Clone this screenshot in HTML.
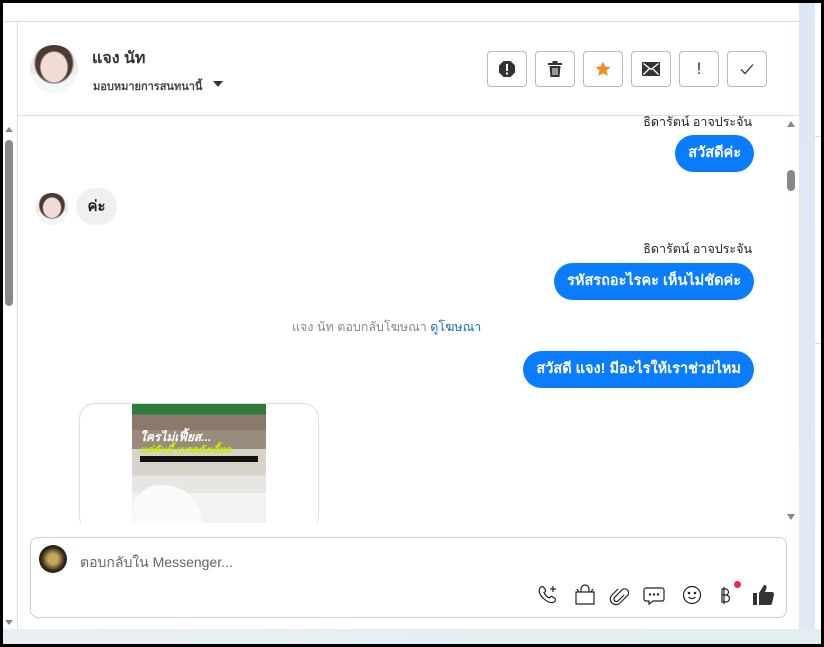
<!DOCTYPE html>
<html><head><meta charset="utf-8"><style>
*{margin:0;padding:0;box-sizing:border-box}
body{width:824px;height:647px;background:#000;position:relative;overflow:hidden;font-family:"Liberation Sans","Noto Sans CJK SC",sans-serif;color:#1c1e21}
.a{position:absolute}
.btn{position:absolute;top:51px;width:40px;height:36px;border:1px solid #bbb;border-radius:4px;background:#fff;display:flex;align-items:center;justify-content:center}
.bub{position:absolute;background:#0a7cff;color:#fff;font-weight:bold;font-size:14.5px;border-radius:19px;height:37px;line-height:37px;padding:0 13px;white-space:nowrap}
.nm{position:absolute;font-size:12.5px;color:#222;right:72px}
.av{background:radial-gradient(ellipse 30% 34% at 50% 46%,#f0dcd2 0 90%,transparent 100%),radial-gradient(ellipse 42% 44% at 50% 38%,#4a3a34 0 90%,transparent 100%),linear-gradient(#efe8e6 0 60%,#f4f6f8 60%)}
</style></head><body>
<div class="a" style="left:3px;top:3px;width:818px;height:641px;background:#fff"></div>
<div class="a" style="left:799px;top:3px;width:16px;height:628px;background:linear-gradient(#dde8f7,#dfeaf5)"></div>
<div class="a" style="left:815px;top:136px;width:6px;height:1px;background:#ddd"></div>
<div class="a" style="left:815px;top:343px;width:6px;height:1px;background:#ddd"></div>
<div class="a" style="left:3px;top:629px;width:818px;height:15px;background:linear-gradient(90deg,#e8eff5,#e2eef2)"></div>
<div class="a" style="left:3px;top:21px;width:796px;height:1px;background:#ddd"></div>
<div class="a" style="left:17px;top:22px;width:1px;height:607px;background:#ddd"></div>
<div class="a" style="left:18px;top:115px;width:781px;height:1px;background:#ddd"></div>
<div class="a" style="left:5px;top:127px;width:0;height:0;border-left:4px solid transparent;border-right:4px solid transparent;border-bottom:5px solid #888"></div>
<div class="a" style="left:5px;top:140px;width:8px;height:166px;background:#8a8a8a;border-radius:4px"></div>
<div class="a" style="left:5px;top:620px;width:0;height:0;border-left:4px solid transparent;border-right:4px solid transparent;border-top:5px solid #888"></div>
<div class="a av" style="left:30px;top:45px;width:48px;height:48px;border-radius:50%"></div>
<div class="a" style="left:92px;top:46px;font-size:16px;font-weight:bold;color:#333">แจง นัท</div>
<div class="a" style="left:93px;top:77px;font-size:11px;font-weight:bold;color:#444">มอบหมายการสนทนานี้</div>
<div class="a" style="left:213px;top:81px;border-left:5px solid transparent;border-right:5px solid transparent;border-top:6px solid #333"></div>
<div class="btn" style="left:487px"><svg width="18" height="18" viewBox="0 0 18 18"><polygon points="5.5,1 12.5,1 17,5.5 17,12.5 12.5,17 5.5,17 1,12.5 1,5.5" fill="#333"/><rect x="8" y="4" width="2" height="7" fill="#fff"/><rect x="8" y="12.5" width="2" height="2" fill="#fff"/></svg></div>
<div class="btn" style="left:535px"><svg width="16" height="18" viewBox="0 0 16 18"><rect x="1" y="3" width="14" height="2" fill="#333"/><rect x="5.5" y="1" width="5" height="2" fill="#333"/><path d="M2.5 6h11l-1 11h-9z" fill="#333"/><path d="M6 8v7M8 8v7M10 8v7" stroke="#fff" stroke-width="1"/></svg></div>
<div class="btn" style="left:583px"><svg width="18" height="18" viewBox="0 0 24 24"><path d="M12 2l3 6.5 7 .8-5.2 4.8 1.4 7L12 17.6 5.8 21.1l1.4-7L2 9.3l7-.8z" fill="#f28c28"/></svg></div>
<div class="btn" style="left:631px"><svg width="18" height="14" viewBox="0 0 18 14"><rect x="0" y="0" width="18" height="14" rx="1" fill="#333"/><path d="M1.5 1.5L9 7.5 16.5 1.5M1.5 12.5L7 7M16.5 12.5L11 7" stroke="#fff" stroke-width="1.3" fill="none"/></svg></div>
<div class="btn" style="left:679px;font-size:17px;color:#333">!</div>
<div class="btn" style="left:727px"><svg width="14" height="12" viewBox="0 0 14 12"><path d="M1 6.5l4 4L13 1.5" stroke="#333" stroke-width="1.3" fill="none"/></svg></div>
<div class="a" style="left:787px;top:121px;border-left:4px solid transparent;border-right:4px solid transparent;border-bottom:6px solid #888"></div>
<div class="a" style="left:787px;top:170px;width:8px;height:21px;background:#888;border-radius:4px"></div>
<div class="a" style="left:787px;top:514px;border-left:4px solid transparent;border-right:4px solid transparent;border-top:6px solid #888"></div>
<div class="nm" style="top:112px">ธิดารัตน์ อาจประจัน</div>
<div class="bub" style="right:70px;top:135px">สวัสดีค่ะ</div>
<div class="a av" style="left:36px;top:193px;width:32px;height:32px;border-radius:50%"></div>
<div class="a" style="left:76px;top:188px;height:37px;width:41px;border-radius:19px;background:#f0f0f0;font-size:15px;font-weight:bold;line-height:37px;text-align:center">ค่ะ</div>
<div class="nm" style="top:239px">ธิดารัตน์ อาจประจัน</div>
<div class="bub" style="right:70px;top:263px">รหัสรถอะไรคะ เห็นไม่ชัดค่ะ</div>
<div class="a" style="left:292px;top:317px;font-size:12.5px;color:#888">แจง นัท ตอบกลับโฆษณา <span style="color:#1a6db5">ดูโฆษณา</span></div>
<div class="bub" style="right:70px;top:351px">สวัสดี แจง! มีอะไรให้เราช่วยไหม</div>
<div class="a" style="left:79px;top:403px;width:240px;height:130px;border:1px solid #ddd;border-radius:16px"></div>
<div class="a" style="left:132px;top:404px;width:134px;height:119px;background:linear-gradient(#2d7a3a 0 9%,#8a7a6a 9% 22%,#9a8c7c 22% 38%,#d8d2c8 38% 60%,#e8e6e2 60% 75%,#f2f2f0 75%)"></div>
<div class="a" style="left:132px;top:485px;width:70px;height:38px;background:#fafafa;border-radius:30px 40px 0 0"></div>
<div class="a" style="left:140px;top:428px;width:118px;color:#fff;font-size:12px;font-weight:bold;font-style:italic">ใครไม่เฟี้ยส...</div>
<div class="a" style="left:140px;top:443px;width:118px;font-size:10px;color:#c4f000;font-weight:bold;font-style:italic">แค่คันนี้ เบรคดังเอี้ยด</div>
<div class="a" style="left:140px;top:456px;width:118px;height:6px;background:#111"></div>
<div class="a" style="left:18px;top:523px;width:768px;height:106px;background:#fff"></div>
<div class="a" style="left:30px;top:537px;width:757px;height:81px;border:1px solid #ccc;border-radius:8px;background:#fff"></div>
<div class="a" style="left:39px;top:545px;width:28px;height:28px;border-radius:50%;background:radial-gradient(#c9a85a 0 25%,#2a2418 60%)"></div>
<div class="a" style="left:80px;top:552px;font-size:14px;color:#666">ตอบกลับใน Messenger...</div>
<svg class="a" style="left:536px;top:583px" width="240" height="24" viewBox="0 0 240 24" fill="none" stroke="#222" stroke-width="1.2">
<path d="M4 5c1-1.5 2.5-2 3.5-1l2 3c.5 1-.5 2-1.5 2.5 1 2.5 3 4.5 5.5 5.5.5-1 1.5-2 2.5-1.5l3 2c1 1 .5 2.5-1 3.5-3 2-8-1-11-4S2 8 4 5z"/><path d="M17 3v6M14 6h6"/>
<path d="M40 9h18v12H40z"/><path d="M45 9V6a4 4 0 0 1 8 0v3M43 9l-2-3M55 9l2-3"/>
<path d="M88 12l-6 6a2.5 2.5 0 0 1-3.5-3.5l8-8a4 4 0 0 1 5.5 5.5l-8 8a5.5 5.5 0 0 1-8-8l6-6"/>
<path d="M110 5h16a2 2 0 0 1 2 2v9a2 2 0 0 1-2 2h-9l-4 3v-3h-3a2 2 0 0 1-2-2V7a2 2 0 0 1 2-2z"/><circle cx="114" cy="11.5" r=".6" fill="#222"/><circle cx="118" cy="11.5" r=".6" fill="#222"/><circle cx="122" cy="11.5" r=".6" fill="#222"/>
<circle cx="156" cy="12" r="8.5"/><circle cx="153" cy="10" r=".7" fill="#222"/><circle cx="159" cy="10" r=".7" fill="#222"/><path d="M152.5 14c2 2 5 2 7 0"/>
<path d="M188 4v17M186 6h3.5a3 3 0 0 1 0 6H186M186 12h4a3.5 3.5 0 0 1 0 7H186V6"/>
</svg>
<div class="a" style="left:734px;top:581px;width:7px;height:7px;border-radius:50%;background:#f0284a"></div>
<svg class="a" style="left:752px;top:583px" width="23" height="23" viewBox="0 0 23 23"><rect x="1" y="10" width="4" height="12" fill="#333"/><path d="M7 10l5-8c2 0 3 1 2.5 3L13 9h7a2 2 0 0 1 2 2.5l-2 9a2 2 0 0 1-2 1.5H7z" fill="#333"/></svg>
</body></html>
